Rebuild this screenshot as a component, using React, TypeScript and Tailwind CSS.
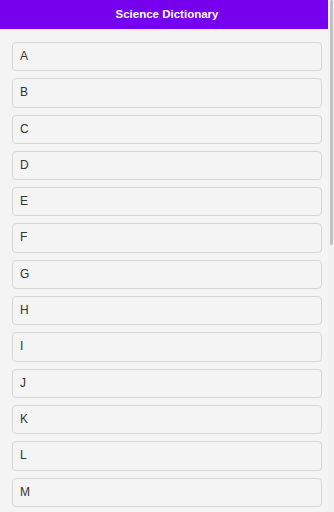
import React from "react";

const letters = "ABCDEFGHIJKLMNOPQRSTUVWXYZ".split("");

export default function App() {
  return (
    <div
      className="flex h-[512px] w-[334px] overflow-hidden bg-[#f4f4f4]"
      style={{ fontFamily: '"Liberation Sans", Arial, sans-serif' }}
    >
      <div className="flex w-[328px] flex-col overflow-hidden">
        <header className="flex h-[29px] shrink-0 items-center justify-center bg-[#7600ee] pl-[6px] text-[11.5px] font-bold text-white">
          Science Dictionary
        </header>
        <ul className="flex flex-col gap-[7px] pl-3 pr-[6px] pt-[13px]">
          {letters.map((l) => (
            <li
              key={l}
              className="rounded-[4px] border border-[#d6d6d6] bg-[#f4f4f4] px-[7px] py-[7px] text-[12px] leading-[13.3px] text-[#333333]"
            >
              {l}
            </li>
          ))}
        </ul>
      </div>
      <div className="flex h-full w-[6px] shrink-0 bg-[#f1f1f1] pl-[2px] pr-[1px]">
        <div className="h-[245px] w-[3px] rounded-full bg-[#c1c1c1]" />
      </div>
    </div>
  );
}
